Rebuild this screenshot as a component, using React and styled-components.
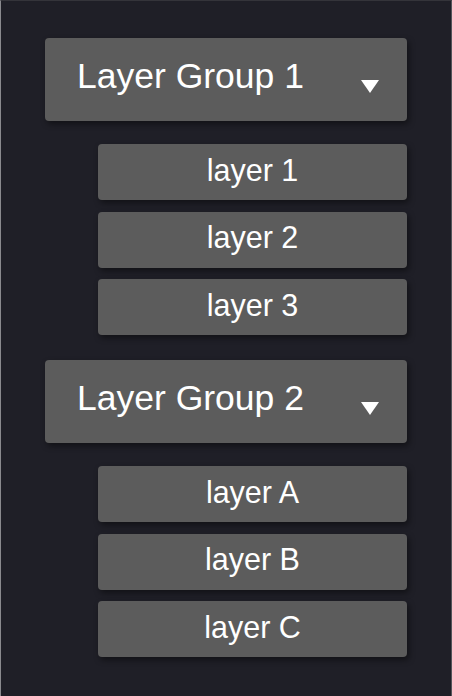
import styled, { createGlobalStyle } from 'styled-components';

const GlobalStyle = createGlobalStyle`
  html, body {
    margin: 0;
    padding: 0;
    background: #1f1f27;
  }
  body {
    font-family: 'Liberation Sans', Arial, sans-serif;
  }
`;

const groups = [
  { title: 'Layer Group 1', layers: ['layer 1', 'layer 2', 'layer 3'] },
  { title: 'Layer Group 2', layers: ['layer A', 'layer B', 'layer C'] },
];

export default function App() {
  return (
    <>
      <GlobalStyle />
      <Panel>
        {groups.map((group) => (
          <Group key={group.title}>
            <GroupHeader>
              <GroupTitle>{group.title}</GroupTitle>
              <Caret viewBox='0 0 18 13'>
                <polygon points='0,0 18,0 9,13' fill='#fff' />
              </Caret>
            </GroupHeader>
            <LayerList>
              {group.layers.map((layer) => (
                <LayerItem key={layer}>{layer}</LayerItem>
              ))}
            </LayerList>
          </Group>
        ))}
      </Panel>
    </>
  );
}

const Panel = styled.div`
  box-sizing: border-box;
  width: 452px;
  height: 696px;
  border-left: 1px solid #8a8a8e;
  border-right: 1px solid #55555a;
  border-top: 1px solid #34343a;
  padding: 37px 0 0 44px;
  display: flex;
  flex-direction: column;
  gap: 25px;
`;

const Group = styled.div`
  display: flex;
  flex-direction: column;
  gap: 23px;
  width: 362px;
`;

const GroupHeader = styled.div`
  height: 83px;
  background: #5c5c5c;
  border-radius: 4px;
  box-shadow: 2px 3px 6px rgba(0, 0, 0, 0.45);
  display: flex;
  align-items: center;
  justify-content: space-between;
  padding: 0 28px 0 32px;
  box-sizing: border-box;
`;

const GroupTitle = styled.span`
  color: #fff;
  font-size: 35.5px;
  line-height: 1;
  margin-bottom: 5px;
`;

const Caret = styled.svg`
  width: 18px;
  height: 13px;
  margin-top: 14px;
`;

const LayerList = styled.div`
  display: flex;
  flex-direction: column;
  gap: 11.5px;
  margin-left: 53px;
`;

const LayerItem = styled.div`
  height: 56px;
  background: #5c5c5c;
  border-radius: 4px;
  box-shadow: 2px 3px 6px rgba(0, 0, 0, 0.45);
  display: flex;
  align-items: center;
  justify-content: center;
  color: #fff;
  font-size: 30.5px;
  line-height: 1;
  padding-bottom: 4px;
  box-sizing: border-box;
`;
